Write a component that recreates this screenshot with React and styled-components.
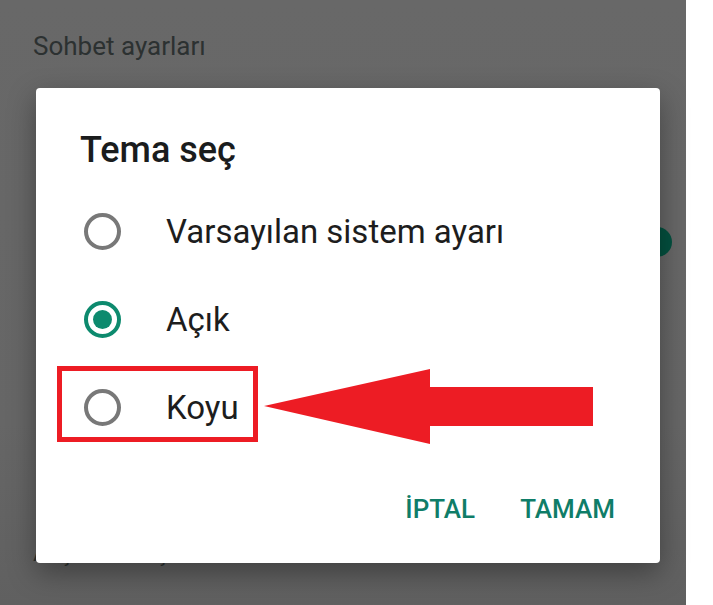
import React from "react";
import styled, { createGlobalStyle } from "styled-components";

const GlobalStyle = createGlobalStyle`
  html, body {
    margin: 0;
    padding: 0;
    background: #ffffff;
    font-family: Roboto, "Liberation Sans", sans-serif;
  }
`;

const options = [
  { label: "Varsayılan sistem ayarı", checked: false },
  { label: "Açık", checked: true },
  { label: "Koyu", checked: false },
];

function Radio({ checked }) {
  return (
    <RadioCircle $checked={checked}>
      {checked && <RadioDot />}
    </RadioCircle>
  );
}

function Arrow() {
  return (
    <ArrowSvg width="334" height="80" viewBox="0 0 334 80">
      <polygon
        points="2,39 168,2 168,20 331,20 331,59 168,59 168,77"
        fill="#ed1c24"
      />
    </ArrowSvg>
  );
}

export default function App() {
  return (
    <>
      <GlobalStyle />
      <Page>
        <Screen>
          <SectionTitle>Sohbet ayarları</SectionTitle>
          <ToggleRow>
            <Thumb />
          </ToggleRow>
          <ArchivedLabel>Arşivlenmiş sohbetler</ArchivedLabel>

          <Dialog>
            <Title>Tema seç</Title>
            <Options>
              {options.map((o) => (
                <Option key={o.label}>
                  <Radio checked={o.checked} />
                  <Label>{o.label}</Label>
                </Option>
              ))}
            </Options>
            <Actions>
              <ActionButton>İPTAL</ActionButton>
              <ActionButton>TAMAM</ActionButton>
            </Actions>
          </Dialog>

          <Highlight />
          <Arrow />
        </Screen>
        <Margin />
      </Page>
    </>
  );
}

const Page = styled.div`
  display: flex;
  width: 713px;
  height: 605px;
  overflow: hidden;
`;

const Screen = styled.div`
  position: relative;
  width: 686px;
  height: 605px;
  background: linear-gradient(#686868, #666666 70%, #606060);
  display: flex;
  flex-direction: column;
  padding-left: 33px;
  box-sizing: border-box;
`;

const Margin = styled.div`
  flex: 1;
  background: #ffffff;
`;

const SectionTitle = styled.div`
  margin-top: 33px;
  font-size: 26px;
  line-height: 26px;
  color: #2c3131;
`;

const ToggleRow = styled.div`
  display: flex;
  justify-content: flex-end;
  margin-top: 168px;
  padding-right: 14px;
`;

const Thumb = styled.div`
  width: 30px;
  height: 30px;
  border-radius: 50%;
  background: #03503f;
`;

const ArchivedLabel = styled.div`
  margin-top: 282px;
  font-size: 26px;
  line-height: 26px;
  color: #2c3131;
`;

const Dialog = styled.div`
  position: absolute;
  left: 36px;
  top: 88px;
  width: 624px;
  height: 475px;
  box-sizing: border-box;
  background: #ffffff;
  border-radius: 4px;
  box-shadow: 0 10px 28px rgba(0, 0, 0, 0.35);
  display: flex;
  flex-direction: column;
  padding: 44px 45px 31px 44px;
`;

const Title = styled.h2`
  margin: 0;
  font-size: 36px;
  line-height: 36px;
  font-weight: 500;
  color: #1a1c1d;
`;

const Options = styled.div`
  display: flex;
  flex-direction: column;
  margin-top: 19px;
`;

const Option = styled.div`
  display: flex;
  align-items: center;
  height: 88px;
`;

const RadioCircle = styled.div`
  width: 37px;
  height: 37px;
  box-sizing: border-box;
  margin-left: 4px;
  border-radius: 50%;
  border: 4px solid ${(p) => (p.$checked ? "#0d8a6e" : "#787878")};
  display: flex;
  align-items: center;
  justify-content: center;
`;

const RadioDot = styled.div`
  width: 19px;
  height: 19px;
  border-radius: 50%;
  background: #0d8a6e;
`;

const Label = styled.span`
  margin-left: 45px;
  font-size: 33px;
  line-height: 33px;
  color: #1d1d1d;
`;

const Actions = styled.div`
  margin-top: auto;
  display: flex;
  justify-content: flex-end;
  gap: 45px;
`;

const ActionButton = styled.span`
  padding: 10px 0;
  font-size: 26px;
  line-height: 26px;
  font-weight: 500;
  color: #0f7d68;
`;

const Highlight = styled.div`
  position: absolute;
  left: 57px;
  top: 366px;
  width: 201px;
  height: 76px;
  box-sizing: border-box;
  border: 5px solid #ed1c24;
`;

const ArrowSvg = styled.svg`
  position: absolute;
  left: 262px;
  top: 367px;
  display: block;
`;
